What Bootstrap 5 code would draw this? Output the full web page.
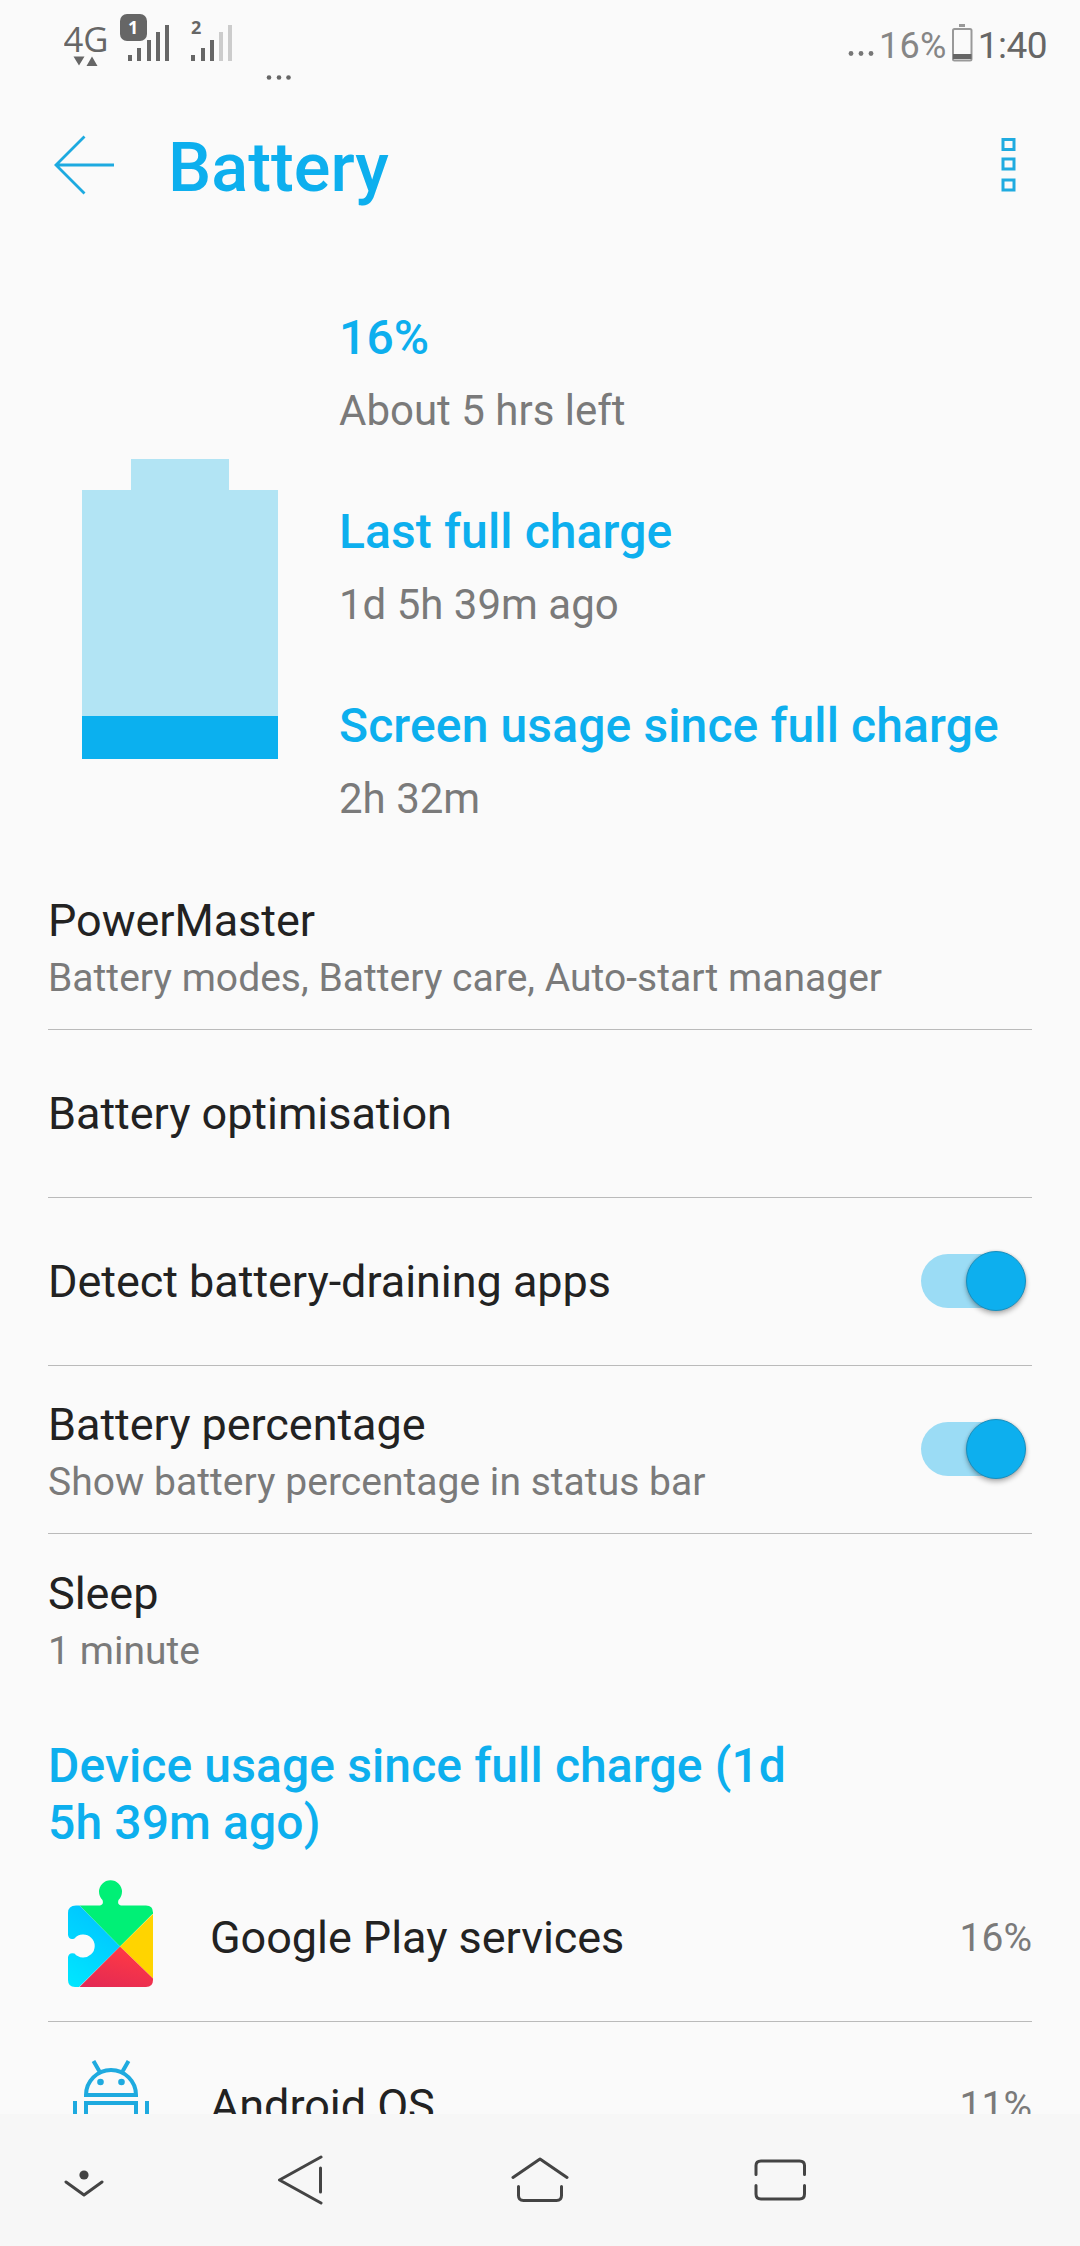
<!DOCTYPE html>
<html lang="en">
<head>
<meta charset="utf-8">
<title>Battery</title>
<meta name="viewport" content="width=device-width, initial-scale=1">
<link href="https://cdn.jsdelivr.net/npm/bootstrap@5.3.0/dist/css/bootstrap.min.css" rel="stylesheet">
<style>
:root { --accent:#0dafee; --dim:#7a7a7a; }
body { font-family:Roboto,"Noto Sans",sans-serif; background:#fafafa; color:#222; }
.screen { width:1080px; height:2246px; }
svg { display:block; flex:none; }
.status { height:90px; color:#666; padding-top:14px; padding-left:64px; padding-right:33px; }
.status-right { font-size:37px; line-height:64px; }
.pct { color:#868686; font-size:36px; letter-spacing:.3px; margin-left:1px; margin-right:4px; }
.clock { margin-left:5px; letter-spacing:-.5px; }
.title-bar { height:150px; padding:0 60px 0 54px; }
.title-bar h1 { font-size:68.5px; line-height:80px; font-weight:500; color:var(--accent); margin-left:54px; padding-top:6px; }
.summary { height:622px; padding:69px 0 0 82px; gap:61px; }
.summary svg { margin-top:150px; }
.accent-text { font-size:48px; line-height:58px; font-weight:500; color:var(--accent); letter-spacing:.12px; }
.stat { height:194px; white-space:nowrap; }
.stat-sub { font-size:42px; line-height:50px; color:var(--dim); padding-top:19px; }
.setting { height:168px; margin:0 48px; border-bottom:1px solid #bababa; }
.setting-name { font-size:45px; line-height:54px; letter-spacing:-.05px; padding-top:1px; }
.setting-text { padding-top:4px; }
.setting-sub { font-size:39px; line-height:48px; color:var(--dim); padding-top:6px; letter-spacing:.03px; }
.toggle { width:105px; height:60px; margin-right:6px; margin-bottom:1px; padding:3px 0; }
.toggle-track { width:99px; height:54px; border-radius:27px; background:#9bdcf5; }
.toggle-thumb { top:0; right:0; width:60px; height:60px; background:var(--accent); border:1px solid #168fbf; box-shadow:0 3px 5px rgba(0,0,0,.28),0 0 3px rgba(0,0,0,.15); }
.usage-head { height:152px; padding:35px 48px 0; width:860px; }
.usage-head .accent-text { line-height:57px; }
.app-icon { width:162px; padding-left:20px; padding-bottom:1px; }
.play-icon { margin-bottom:8px; }
.share { font-size:39px; color:var(--dim); padding-top:2px; }
.nav-keys { height:132px; background:#f7f7f7; }
</style>
</head>
<body>
<div class="screen d-flex flex-column overflow-hidden">
  <header class="status d-flex justify-content-between flex-shrink-0">
    <svg width="240" height="72" viewBox="64 14 240 72">
      <g fill="#666">
        <text x="63.500" y="52" font-family="Open Sans, sans-serif" font-size="34" textLength="45" lengthAdjust="spacingAndGlyphs">4G</text>
        <path d="M73.500 56.500h11l-5.500 9zM86.500 66h11l-5.500-9.500z"/>
        <rect x="120" y="14" width="27" height="27" rx="7"/>
        <path d="M128 55h4v6h-4zM137 48h4v13h-4zM147 40h4v21h-4zM156 32h4v29h-4zM165 25h4v36h-4zM191 55h4v6h-4zM201 48h4v13h-4zM210 40h4v21h-4z"/>
        <path fill="#ccc" d="M219 32h4v29h-4zM228 25h4v36h-4z"/>
        <text x="191" y="34" font-family="Open Sans, sans-serif" font-weight="700" font-size="18">2</text>
        <text x="128" y="34" font-family="Open Sans, sans-serif" font-weight="700" font-size="18" fill="#fff">1</text>
        <circle cx="269" cy="77.500" r="2.300"/><circle cx="279" cy="77.500" r="2.300"/><circle cx="288.500" cy="77.500" r="2.300"/>
      </g>
    </svg>
    <div class="status-right d-flex">
      <svg width="30" height="62" viewBox="848 14 30 62" fill="#777"><circle cx="851" cy="53.500" r="2.400"/><circle cx="861" cy="53.500" r="2.400"/><circle cx="871" cy="53.500" r="2.400"/></svg>
      <span class="pct">16%</span>
      <svg width="22" height="62" viewBox="952 14 22 62"><path fill="#999" d="M960 24h6v3h-6z"/><rect x="954" y="29" width="18.500" height="31.500" rx="1.500" fill="none" stroke="#999" stroke-width="2"/><path fill="#666" d="M954 54h18.500v5H954z"/></svg>
      <span class="clock">1:40</span>
    </div>
  </header>

  <nav class="title-bar d-flex align-items-center flex-shrink-0">
    <svg width="60" height="60" viewBox="54 135 60 60" fill="none" stroke="#1daae0" stroke-width="2.800"><path d="M84.500 136.500L56 165l28.500 28.500M56 165h58"/></svg>
    <h1 class="mb-0">Battery</h1>
    <svg class="ms-auto" width="20" height="56" viewBox="1000 137 20 56" fill="none" stroke="#1fabe0" stroke-width="3"><path d="M1003 139.500h11v10h-11zM1003 159h11v10h-11zM1003 180h11v10h-11z"/></svg>
  </nav>

  <section class="summary d-flex flex-shrink-0">
    <svg width="196" height="300" viewBox="0 0 196 300" shape-rendering="crispEdges"><path fill="#b2e4f4" d="M49 0h98v31h49v226H0V31h49z"/><path fill="#0bb0ef" d="M0 257h196v43H0z"/></svg>
    <div>
      <div class="stat"><div class="accent-text">16%</div><div class="stat-sub">About 5 hrs left</div></div>
      <div class="stat"><div class="accent-text">Last full charge</div><div class="stat-sub">1d 5h 39m ago</div></div>
      <div class="stat"><div class="accent-text">Screen usage since full charge</div><div class="stat-sub">2h 32m</div></div>
    </div>
  </section>

  <main class="flex-grow-1 overflow-hidden">
    <div class="setting d-flex align-items-center"><div class="setting-text"><div class="setting-name">PowerMaster</div><div class="setting-sub">Battery modes, Battery care, Auto-start manager</div></div></div>
    <div class="setting d-flex align-items-center"><div class="setting-name">Battery optimisation</div></div>
    <div class="setting d-flex align-items-center justify-content-between"><div class="setting-name">Detect battery-draining apps</div>
      <div class="toggle position-relative"><div class="toggle-track"></div><div class="toggle-thumb position-absolute rounded-circle"></div></div></div>
    <div class="setting d-flex align-items-center justify-content-between"><div class="setting-text"><div class="setting-name">Battery percentage</div><div class="setting-sub">Show battery percentage in status bar</div></div>
      <div class="toggle position-relative"><div class="toggle-track"></div><div class="toggle-thumb position-absolute rounded-circle"></div></div></div>
    <div class="setting border-0 d-flex align-items-center"><div class="setting-text"><div class="setting-name">Sleep</div><div class="setting-sub">1 minute</div></div></div>
    <div class="usage-head"><div class="accent-text">Device usage since full charge (1d<br>5h 39m ago)</div></div>
    <div class="setting d-flex align-items-center">
      <div class="app-icon">
        <svg class="play-icon" width="86" height="110" viewBox="68 1878 86 110">
          <defs>
            <clipPath id="piece"><path d="M76 1905.500H100Q104 1904.500 102.500 1900A11.500 11.500 0 1 1 118.500 1900Q117 1904.500 121 1905.500H146Q153 1905.500 153 1912.500V1980Q153 1987 146 1987H75Q68 1987 68 1980V1957Q69 1952 74.500 1953.500A11.500 11.500 0 1 0 74.500 1938.500Q69 1940.500 68 1935V1913Q68 1905.500 76 1905.500Z"/></clipPath>
            <linearGradient id="blue" x1="0" y1="1" x2=".4" y2="0"><stop offset="0" stop-color="#00e8ff"/><stop offset="1" stop-color="#00c4ff"/></linearGradient>
            <linearGradient id="red" x1="0" y1="1" x2=".5" y2="0"><stop offset="0" stop-color="#e02855"/><stop offset="1" stop-color="#ff3945"/></linearGradient>
          </defs>
          <g clip-path="url(#piece)">
            <path fill="#00f076" d="M78.500 1904.500V1878H154V1912.500L120 1946.500z"/>
            <path fill="url(#blue)" d="M68 1900h6L120 1946.500L78 1988H68z"/>
            <path fill="#ffd400" d="M154 1913v66.500L120 1946.500z"/>
            <path fill="url(#red)" d="M120 1946.500L154 1979.500V1988H78.500z"/>
          </g>
        </svg>
      </div>
      <div class="setting-name">Google Play services</div><div class="share ms-auto">16%</div>
    </div>
    <div class="setting d-flex align-items-center">
      <div class="app-icon">
        <svg width="86" height="90" viewBox="68 2060 86 90" fill="none" stroke="#1eaadf" stroke-width="4"><path d="M93.500 2061l6 10.500M128.500 2061l-6 10.500M86 2095a25 25 0 0 1 50 0zM86 2150v-47h50v47M75 2101v32M147 2101v32"/><circle cx="100.500" cy="2082" r="3.300" fill="#1eaadf" stroke="none"/><circle cx="121.500" cy="2082" r="3.300" fill="#1eaadf" stroke="none"/></svg>
      </div>
      <div class="setting-name">Android OS</div><div class="share ms-auto">11%</div>
    </div>
  </main>

  <footer class="nav-keys flex-shrink-0">
    <svg width="1080" height="132" viewBox="0 2114 1080 132" fill="none" stroke="#444" stroke-width="3" stroke-linecap="round" stroke-linejoin="round">
      <circle cx="84" cy="2175" r="4.600" fill="#444" stroke="none"/>
      <path d="M66 2182l18 13 18-13M321 2157l-41.500 23L321 2203M320.500 2168v24M513 2177.500l27-18.500 27 18.500M518.500 2186.500v9q0 5 5 5h33q5 0 5-5v-9M756 2174.500v-9q0-4.500 5-4.500h38.500q5 0 5 4.500v9M756 2185.500v8.500q0 5 5 5h38.500q5 0 5-5v-8.500"/>
    </svg>
  </footer>
</div>
<script src="https://cdn.jsdelivr.net/npm/bootstrap@5.3.0/dist/js/bootstrap.bundle.min.js"></script>
</body>
</html>
